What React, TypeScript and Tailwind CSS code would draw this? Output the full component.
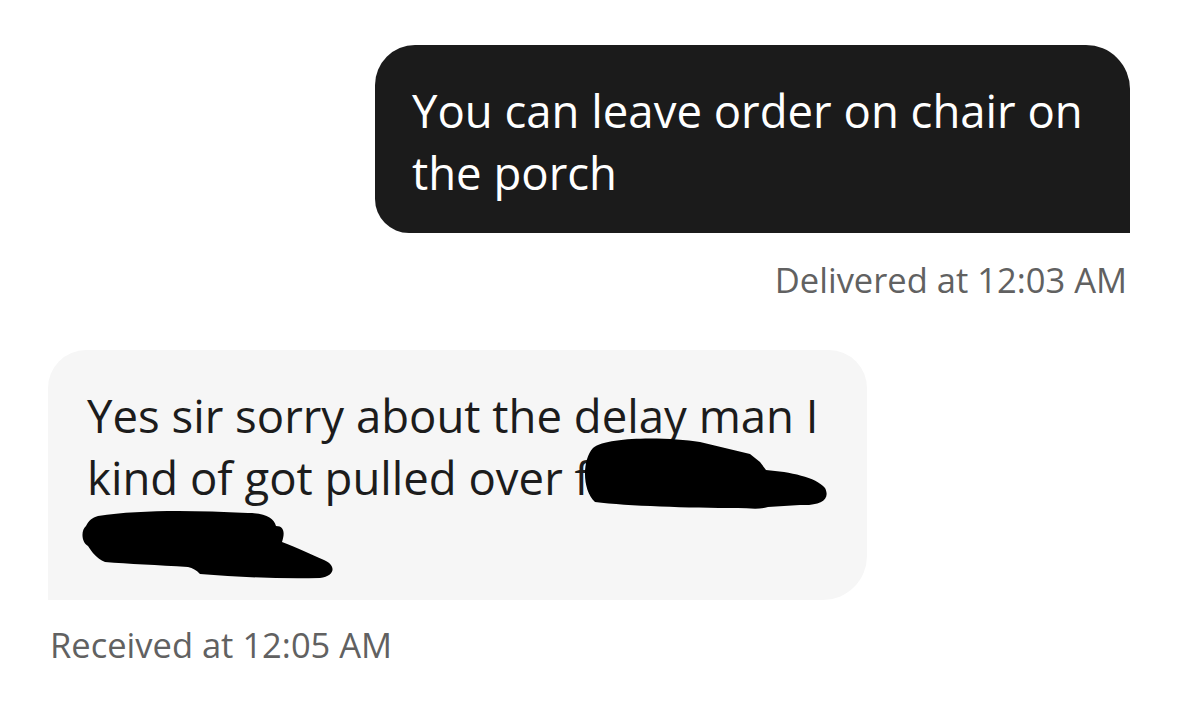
import React from "react";

// Redaction scribbles drawn over the received message
function Scribbles() {
  return (
    <svg
      className="absolute inset-0 pointer-events-none"
      width="819"
      height="250"
      viewBox="0 0 819 250"
    >
      <path
        d="M545 98 C560 86 620 87 652 92 L702 104 L712 112 L718 120 C742 122 768 127 777 138 C783 150 772 156 752 155 L720 157 C710 160 700 158 690 158 C640 158 580 156 547 152 C534 140 534 110 545 98 Z"
        fill="#000"
      />
      <path
        d="M50 166 C90 160 140 160 200 163 C218 163 226 168 228 176 C238 176 236 186 234 192 C250 198 262 204 276 210 C288 215 288 226 272 228 C230 229 190 227 152 224 C148 220 145 218 140 217 C110 215 80 214 57 212 C48 208 44 202 40 196 C33 192 33 180 38 176 C41 170 44 168 50 166 Z"
        fill="#000"
      />
    </svg>
  );
}

export default function App() {
  return (
    <div
      className="w-[1179px] h-[701px] bg-white overflow-hidden flex flex-col pt-[45px]"
      style={{ fontFamily: "'Open Sans', Lato, sans-serif" }}
    >
      {/* Sent message */}
      <div className="self-end mr-[49px] w-[755px] bg-[#1b1b1b] text-white rounded-tl-[40px] rounded-tr-[44px] rounded-bl-[34px] rounded-br-none pl-[37px] pr-[10px] pt-[34px] pb-[30px] text-[45.5px] leading-[62px] whitespace-nowrap">
        You can leave order on chair on
        <br />
        the porch
      </div>
      <div className="self-end mr-[52px] mt-[27px] text-[34.5px] leading-[40px] text-[#616161]">
        Delivered at 12:03 AM
      </div>

      {/* Received message */}
      <div className="relative ml-[48px] mt-[50px] w-[819px] bg-[#f6f6f6] text-[#1c1c1c] rounded-tl-[38px] rounded-tr-[38px] rounded-br-[44px] rounded-bl-none pl-[39px] pr-[10px] pt-[34px] pb-[30px] text-[45.5px] leading-[62px] whitespace-nowrap">
        Yes sir sorry about the delay man I
        <br />
        kind of got pulled over f
        <br />
        &nbsp;
        <Scribbles />
      </div>
      <div className="ml-[50px] mt-[25px] text-[34.5px] leading-[40px] text-[#616161]">
        Received at 12:05 AM
      </div>
    </div>
  );
}
